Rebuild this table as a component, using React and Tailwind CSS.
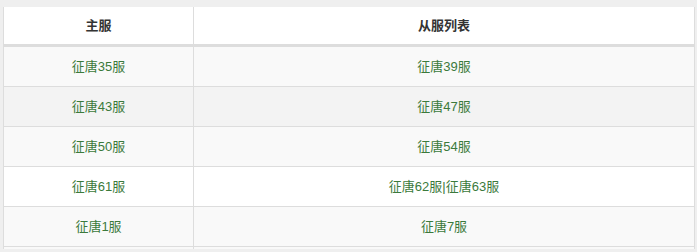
export default function App() {
  const rows = [
    ["征唐35服", "征唐39服", "bg-[#f9f9f9]"],
    ["征唐43服", "征唐47服", "bg-[#f3f3f3]"],
    ["征唐50服", "征唐54服", "bg-[#f9f9f9]"],
    ["征唐61服", "征唐62服|征唐63服", "bg-white"],
    ["征唐1服", "征唐7服", "bg-[#f9f9f9]"],
  ];
  return (
    <div
      className="h-[252px] w-[697px] bg-[#efefef] pt-[7px] pl-[3px] overflow-hidden"
      style={{ fontFamily: '"Liberation Sans", "Noto Sans CJK SC", sans-serif' }}
    >
      <div className="w-[692px] border-x border-[#dddddd] bg-white">
        <div className="flex h-[40px] border-b-[3px] border-[#dddddd] text-[13px] font-bold text-[#333333]">
          <div className="flex w-[190px] items-center justify-center border-r border-[#dddddd]">主服</div>
          <div className="flex flex-1 items-center justify-center">从服列表</div>
        </div>
        {rows.map(([a, b, bg], i) => (
          <div key={i} className={`flex h-[40px] border-b border-[#dddddd] text-[13px] text-[#3b7a3b] ${bg}`}>
            <div className="flex w-[190px] items-center justify-center border-r border-[#dddddd]">{a}</div>
            <div className="flex flex-1 items-center justify-center">{b}</div>
          </div>
        ))}
        <div className="flex h-[2px] bg-[#f9f9f9]">
          <div className="w-[190px] border-r border-[#dddddd]"></div>
        </div>
      </div>
    </div>
  );
}
